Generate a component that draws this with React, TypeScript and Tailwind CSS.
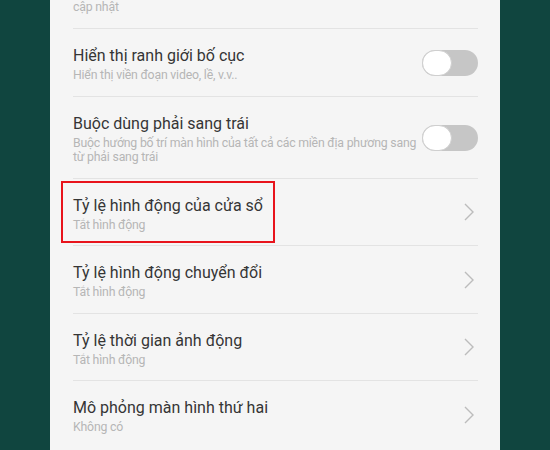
const font = { fontFamily: "Roboto, 'Noto Sans', sans-serif" };

type Row = {
  title: string;
  sub: string[];
  kind: "toggle" | "chevron";
  h: string;
  marked?: boolean;
};

const rows: Row[] = [
  { title: "Hiển thị ranh giới bố cục", sub: ["Hiển thị viền đoạn video, lề, v.v.."], kind: "toggle", h: "h-[68px]" },
  {
    title: "Buộc dùng phải sang trái",
    sub: ["Buộc hướng bố trí màn hình của tất cả các miền địa phương sang", "từ phải sang trái"],
    kind: "toggle",
    h: "h-[82px]",
  },
  { title: "Tỷ lệ hình động của cửa sổ", sub: ["Tắt hình động"], kind: "chevron", h: "h-[67px]", marked: true },
  { title: "Tỷ lệ hình động chuyển đổi", sub: ["Tắt hình động"], kind: "chevron", h: "h-[68px]" },
  { title: "Tỷ lệ thời gian ảnh động", sub: ["Tắt hình động"], kind: "chevron", h: "h-[67px]" },
  { title: "Mô phỏng màn hình thứ hai", sub: ["Không có"], kind: "chevron", h: "h-[68px]" },
];

const Toggle = () => (
  <div className="relative w-[56px] h-[26px] rounded-full bg-[#c6c6c6] shrink-0">
    <div className="absolute left-0 top-0 w-[30px] h-[26px] rounded-full bg-white border border-[#cfcfcf]" />
  </div>
);

const Chevron = () => (
  <svg width="12" height="18" viewBox="0 0 12 18" className="shrink-0 mr-[3px]">
    <polyline points="2,1 10,9 2,17" fill="none" stroke="#bcbcbc" strokeWidth="1.4" />
  </svg>
);

export default function App() {
  return (
    <div className="w-[550px] h-[450px] flex justify-center bg-[#10453f] overflow-hidden" style={font}>
      <div className="w-[450px] h-full bg-[#f5f5f5] pl-[23px] pr-[22px] overflow-hidden">
        {/* tail of the row scrolled above */}
        <div className="h-[28px] text-[12.3px] tracking-[-0.2px] leading-[14px] text-[#b6b6b6]">cập nhật</div>

        {rows.map((r) => (
          <div key={r.title} className={`relative flex items-center border-t border-[#e3e3e3] ${r.h}`}>
            <div className="flex-1 pr-[4px] self-start pt-[16px]">
              <div className="text-[16px] leading-[22px] text-[#353535]">{r.title}</div>
              <div className="mt-[1px] text-[12.3px] tracking-[-0.2px] leading-[14px] text-[#b6b6b6]">
                {r.sub.map((s) => (
                  <div key={s}>{s}</div>
                ))}
              </div>
            </div>
            {r.kind === "toggle" ? <Toggle /> : <Chevron />}
            {r.marked && (
              <div className="absolute left-[-12px] top-[2px] w-[214px] h-[62px] border-2 border-[#e8141c]" />
            )}
          </div>
        ))}
      </div>
    </div>
  );
}
